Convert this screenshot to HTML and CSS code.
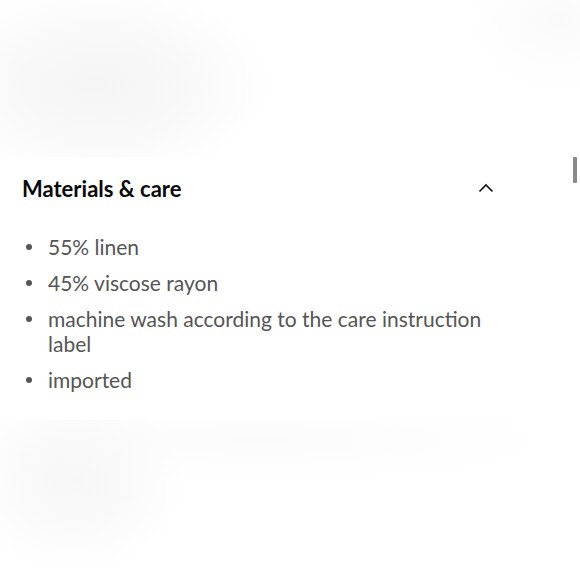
FILE: index.html
```html
<!DOCTYPE html>
<html lang="en">
<head>
<meta charset="utf-8">
<title>Materials &amp; care</title>
<link rel="stylesheet" href="styles.css">
</head>
<body>
<div class="page">
  <div class="backdrop backdrop-top"></div>
  <section class="panel">
    <div class="panel-head">
      <h2 class="panel-title">Materials &amp; care</h2>
      <button class="toggle" aria-label="Collapse">
        <svg width="16" height="10" viewBox="0 0 16 10"><path d="M1.5 8.5 L8 2 L14.5 8.5" fill="none" stroke="#111" stroke-width="1.6"/></svg>
      </button>
    </div>
    <ul class="care-list">
      <li>55% linen</li>
      <li>45% viscose rayon</li>
      <li>machine wash according to the care instruction label</li>
      <li>imported</li>
    </ul>
  </section>
  <div class="backdrop backdrop-bottom"></div>
  <div class="scroll-thumb"></div>
</div>
</body>
</html>
```
FILE: styles.css
```css
html, body {
  margin: 0;
  padding: 0;
  background: #ffffff;
}
.page {
  position: relative;
  width: 580px;
  height: 580px;
  overflow: hidden;
  display: flex;
  flex-direction: column;
  font-family: "Lato", "Noto Sans", sans-serif;
}
.backdrop-top {
  height: 157px;
  flex: none;
  background:
    radial-gradient(ellipse 170px 100px at 100px 85px, #f5f5f5 0%, #f8f8f8 45%, rgba(255,255,255,0) 100%),
    radial-gradient(ellipse 90px 70px at 560px 20px, #fafafa 0%, rgba(255,255,255,0) 100%),
    #ffffff;
}
.panel {
  flex: none;
  height: 263px;
  box-sizing: border-box;
  padding: 20px 0 0 22px;
  background: #ffffff;
}
.panel-head {
  display: flex;
  align-items: center;
  justify-content: space-between;
  width: 472px;
  height: 24px;
}
.panel-title {
  margin: 0;
  font-size: 22px;
  line-height: 24px;
  font-weight: 700;
  color: #0a0a0a;
}
.toggle {
  border: 0;
  background: none;
  padding: 0;
  width: 16px;
  height: 10px;
  display: flex;
  margin-top: -3px;
}
.care-list {
  list-style: none;
  margin: 33px 0 0 0;
  padding: 0;
  width: 480px;
  display: flex;
  flex-direction: column;
  gap: 11px;
}
.care-list li {
  position: relative;
  padding-left: 26px;
  font-size: 21px;
  line-height: 25px;
  color: #555555;
}
.care-list li::before {
  content: "";
  position: absolute;
  left: 4px;
  top: 10px;
  width: 6px;
  height: 6px;
  border-radius: 50%;
  background: #555555;
}
.backdrop-bottom {
  flex: 1;
  background:
    radial-gradient(ellipse 110px 90px at 75px 60px, #f7f7f7 0%, #fafafa 50%, rgba(255,255,255,0) 100%),
    radial-gradient(ellipse 300px 40px at 260px 20px, #fbfbfb 0%, rgba(255,255,255,0) 100%),
    #ffffff;
}
.scroll-thumb {
  position: absolute;
  left: 573px;
  top: 157px;
  width: 4px;
  height: 26px;
  border-radius: 1px;
  background: #8a8a8a;
}
```
